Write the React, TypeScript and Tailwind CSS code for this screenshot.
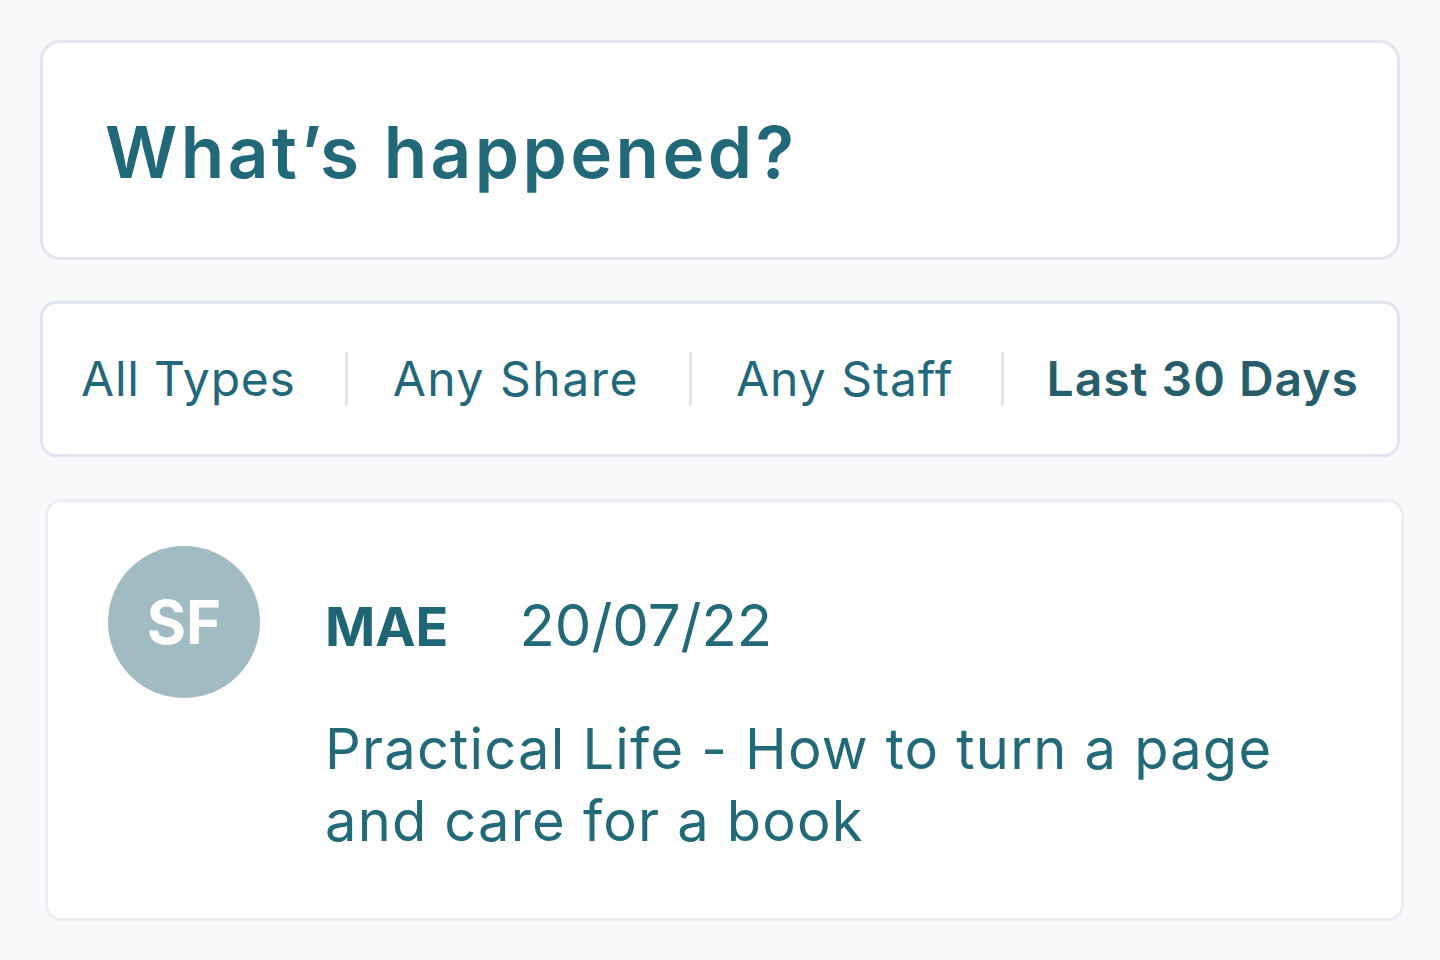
import React from "react";

const font = { fontFamily: "Inter, 'Noto Sans', sans-serif" };

export default function App() {
  return (
    <div
      className="min-h-screen w-full bg-[#f8f9fb] px-10 pt-10 flex flex-col"
      style={font}
    >
      <div className="h-[220px] w-[1360px] bg-white border-[3px] border-[#e3e5ee] rounded-[20px] flex items-center pl-[62px]">
        <h1 className="text-[71px] font-semibold text-[#216878] leading-none tracking-[3.4px] mt-[4px]">
          What’s happened?
        </h1>
      </div>

      <div className="mt-[41px] h-[156px] w-[1360px] bg-white border-[3px] border-[#e3e5ee] rounded-[16px] flex items-center pl-[38px]">
        <span className="text-[48px] text-[#22687a] leading-none tracking-[0.8px]">All Types</span>
        <span className="ml-[49px] mr-[45px] w-[3px] h-[54px] bg-[#e3e5ee]" />
        <span className="text-[48px] text-[#22687a] leading-none tracking-[1.5px]">Any Share</span>
        <span className="ml-[50px] mr-[44px] w-[3px] h-[54px] bg-[#e3e5ee]" />
        <span className="text-[48px] text-[#22687a] leading-none tracking-[1px]">Any Staff</span>
        <span className="ml-[48px] mr-[42px] w-[3px] h-[54px] bg-[#e3e5ee]" />
        <span className="text-[48px] font-semibold text-[#265e6b] leading-none tracking-[1px]">Last 30 Days</span>
      </div>

      <div className="mt-[42px] ml-[5px] h-[422px] w-[1359px] bg-white border-[3px] border-[#eceef4] rounded-[16px] flex pl-[60px] pt-[44px]">
        <div className="w-[152px] h-[152px] rounded-full bg-[#a0bbc1] flex items-center justify-center shrink-0">
          <span className="text-white text-[60px] font-bold leading-none">SF</span>
        </div>
        <div className="ml-[65px] flex flex-col">
          <div className="flex items-baseline mt-[50px]">
            <span className="text-[54px] font-bold text-[#1f6675] leading-none">MAE</span>
            <span className="ml-[71px] text-[58px] text-[#226a78] leading-none">20/07/22</span>
          </div>
          <p className="mt-[59px] text-[56px] text-[#226a78] leading-[72px] tracking-[1.2px] w-[1000px]">
            Practical Life - How to turn a page and care for a book
          </p>
        </div>
      </div>
    </div>
  );
}
